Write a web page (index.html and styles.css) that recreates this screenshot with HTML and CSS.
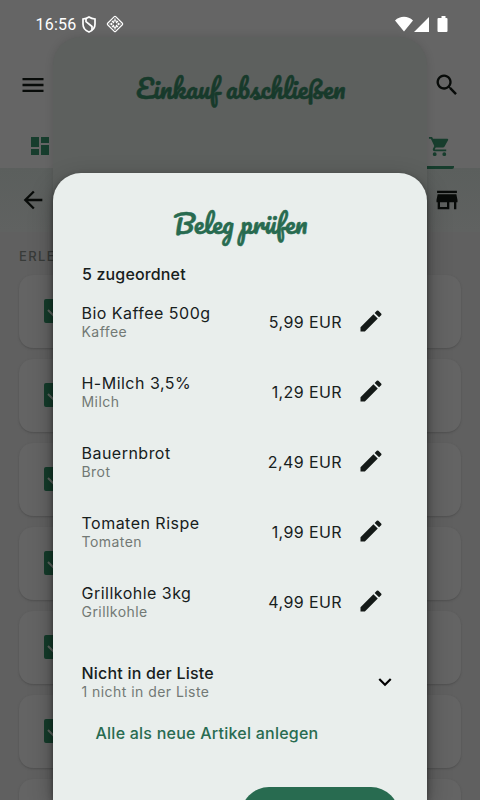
FILE: index.html
```
<!DOCTYPE html>
<html lang="de">
<head>
<meta charset="utf-8">
<meta name="viewport" content="width=device-width, initial-scale=1">
<title>Beleg prüfen</title>
<link rel="stylesheet" href="styles.css">
</head>
<body>
<svg width="0" height="0" class="sprite">
  <symbol id="pencil" viewBox="0 0 24 24"><path d="M3 17.250V21h3.750L17.810 9.940l-3.750-3.750zM20.710 7.040a1 1 0 0 0 0-1.410l-2.340-2.340a1 1 0 0 0-1.410 0l-1.830 1.830 3.750 3.750z"/></symbol>
  <symbol id="check" viewBox="0 0 24 24"><rect width="24" height="24" rx="2"/><path d="M4 11l6 6L21 6" fill="none" stroke="#606763" stroke-width="2"/></symbol>
</svg>
<div class="screen">
  <header class="top">
    <div class="bar menu-bar">
      <svg class="icon" viewBox="0 0 24 24"><path d="M3 18h18v-2H3zm0-5h18v-2H3zm0-7v2h18V6z"/></svg>
      <svg class="icon" viewBox="0 0 24 24"><path d="M15.500 14h-.79l-.28-.27A6.500 6.500 0 1 0 13.730 14.430l.27.28v.79l5 4.990L20.490 19zm-6 0a4.500 4.500 0 1 1 0-9 4.500 4.500 0 0 1 0 9z"/></svg>
    </div>
    <div class="bar tabs">
      <svg class="tab" viewBox="0 0 24 24"><path d="M3 13h8V3H3zm0 8h8v-6H3zm10 0h8V11h-8zm0-18v6h8V3z"/></svg>
      <span class="tab-active"><svg class="tab cart" viewBox="0 0 24 24"><path d="M7 18a2 2 0 1 0 0 4 2 2 0 0 0 0-4zM1 2v2h2l3.600 7.590-1.350 2.450C4.520 15.370 5.480 17 7 17h12v-2H7.420a.25.25 0 0 1-.22-.37L8.100 13h7.450c.75 0 1.410-.41 1.750-1.030l3.580-6.490A1 1 0 0 0 20 4H5.210l-.94-2zm16 16a2 2 0 1 0 0 4 2 2 0 0 0 0-4z"/></svg></span>
    </div>
  </header>
  <div class="bar sub-bar">
    <svg class="icon" viewBox="0 0 24 24"><path d="M20 11H7.830l5.590-5.590L12 4l-8 8 8 8 1.410-1.410L7.830 13H20z"/></svg>
    <svg class="icon store" viewBox="0 0 24 24"><path d="M20.500 4h-17v2h17zm.5 10v-2l-1-5H4l-1 5v2h1v6h10v-6h4v6h2v-6zm-9 4H6v-4h6z"/></svg>
  </div>
  <main class="list">
    <h2 class="section">ERLEDIGT</h2>
    <div class="card"><svg class="check"><use href="#check"/></svg></div>
    <div class="card"><svg class="check"><use href="#check"/></svg></div>
    <div class="card"><svg class="check"><use href="#check"/></svg></div>
    <div class="card"><svg class="check"><use href="#check"/></svg></div>
    <div class="card"><svg class="check"><use href="#check"/></svg></div>
    <div class="card"><svg class="check"><use href="#check"/></svg></div>
    <div class="card"><svg class="check"><use href="#check"/></svg></div>
  </main>
</div>

<section class="sheet back-sheet"><h1 class="script-title">Einkauf abschließen</h1></section>

<section class="sheet front-sheet">
  <h1 class="script-title">Beleg prüfen</h1>
  <h2 class="count">5 zugeordnet</h2>
  <ul class="items">
    <li class="item"><div class="text"><b>Bio Kaffee 500g</b><small>Kaffee</small></div><span class="price">5,99 EUR</span><svg class="pencil"><use href="#pencil"/></svg></li>
    <li class="item"><div class="text"><b>H-Milch 3,5%</b><small>Milch</small></div><span class="price">1,29 EUR</span><svg class="pencil"><use href="#pencil"/></svg></li>
    <li class="item"><div class="text"><b>Bauernbrot</b><small>Brot</small></div><span class="price">2,49 EUR</span><svg class="pencil"><use href="#pencil"/></svg></li>
    <li class="item"><div class="text"><b>Tomaten Rispe</b><small>Tomaten</small></div><span class="price">1,99 EUR</span><svg class="pencil"><use href="#pencil"/></svg></li>
    <li class="item"><div class="text"><b>Grillkohle 3kg</b><small>Grillkohle</small></div><span class="price">4,99 EUR</span><svg class="pencil"><use href="#pencil"/></svg></li>
  </ul>
  <div class="item extra"><div class="text"><b>Nicht in der Liste</b><small>1 nicht in der Liste</small></div><svg class="chevron" viewBox="0 0 24 24"><path d="M16.590 8.590L12 13.170 7.410 8.590 6 10l6 6 6-6z"/></svg></div>
  <a class="link">Alle als neue Artikel anlegen</a>
  <div class="confirm"></div>
</section>

<div class="status">
  <span class="time">16:56</span>
  <svg class="shield" viewBox="0 0 14 17"><path d="M7 1C5 2.300 3 2.800 1 3v5c0 4 2.500 6.700 6 8 3.500-1.300 6-4 6-8V3C11 2.800 9 2.300 7 1z"/><path d="M4 2.700v3l6 4.800v3.500"/></svg>
  <svg class="diamond" viewBox="0 0 18 18"><rect x="3.300" y="3.300" width="11.400" height="11.400" rx="1" transform="rotate(45 9 9)"/><path d="M9 3.500v3M9 11.500v3M3.500 9h3M11.500 9h3M6 6l2 2M12 6l-2 2M6 12l2-2M12 12l-2-2M7 6.500l2-1 2 1M7 11.500l2 1 2-1M6 8l-1 1 1 1M12 8l1 1-1 1"/></svg>
  <svg class="system" viewBox="0 0 53 16"><path d="M0 4.500C5-.5 13-.5 18 4.500L9 15.500zM34 1v15H19zM44.500 2h2V0h4v2h1q1 0 1 1v12q0 1-1 1h-8q-1 0-1-1V3q0-1 1-1z"/></svg>
</div>
</body>
</html>
```
FILE: styles.css
```
* { box-sizing: border-box; }
html, body { margin: 0; height: 100%; overflow: hidden; }
body { background: #606060; font-family: Inter, sans-serif; color: #17201c; }
h1, h2, ul { margin: 0; padding: 0; list-style: none; }
svg { display: block; flex: none; }
.sprite { position: absolute; }

/* page behind the dialogs */
.screen { height: 800px; overflow: hidden; }
.top { height: 168px; padding-top: 60px; background: #656565; }
.bar { display: flex; align-items: center; justify-content: space-between; }
.icon { width: 28px; height: 28px; fill: #080b09; }
.menu-bar { height: 50px; padding: 0 19px; }
.tabs { height: 59px; padding: 0 26px 0 28px; }
.tab { width: 24px; height: 24px; margin-top: 13px; fill: #173d2d; }
.tab-active { display: flex; justify-content: flex-end; width: 54px; height: 59px; padding-right: 3px; border-bottom: 3px solid #173d2d; border-radius: 2px; }
.cart { width: 23px; height: 23px; margin-top: 25px; }
.sub-bar { height: 64px; padding: 0 19px; background: linear-gradient(#5b5f5d, #606261); }
.list { padding: 15px 19px 0; }
.section { height: 28px; font: 500 13px/18px Inter, sans-serif; letter-spacing: 1.4px; color: #383b39; }
.card { height: 73px; margin-bottom: 11px; padding: 24px 0 0 25px; border-radius: 14px; background: #646464; box-shadow: 0 1px 2px #505050; }
.check { width: 24px; height: 24px; fill: #153c2b; }

/* stacked dialogs */
.sheet { position: absolute; left: 53px; width: 373.5px; bottom: 0; border-radius: 28px 28px 0 0; }
.back-sheet { top: 37px; background: #5d605e; box-shadow: 0 0 8px rgba(0, 0, 0, .12); }
.front-sheet { top: 173px; padding: 30px 28.5px 0 29px; background: #e9eeec; box-shadow: 0 2px 5px rgba(0, 0, 0, .35), 0 8px 24px rgba(0, 0, 0, .3); overflow: hidden; }
.script-title { text-align: center; font: 400 25.6px/42px Pacifico, Lato, cursive; -webkit-text-stroke: .5px currentColor; color: #286b50; white-space: nowrap; }
.back-sheet .script-title { padding: 31px 0 0 2px; color: #173a2b; }
.front-sheet .script-title { height: 58px; padding-left: 1px; }
.count { margin-top: 1px; font-size: 16px; font-weight: 500; line-height: 24px; letter-spacing: .15px; }
.item { display: flex; align-items: center; height: 70px; }
.text { display: flex; flex-direction: column; flex: 1; margin-left: -.5px; }
.text b { font-weight: 400; font-size: 16px; line-height: 20px; letter-spacing: .48px; }
.text small { font-size: 14px; line-height: 17px; letter-spacing: .45px; color: #727975; }
.price { padding-top: 1px; font-size: 16px; letter-spacing: .4px; }
.pencil { width: 28px; height: 28px; margin: 0 13px 0 15px; fill: #141917; }
.extra { margin-top: 10px; }
.extra b { font-weight: 500; letter-spacing: .2px; }
.extra small { letter-spacing: .45px; }
.chevron { width: 26px; height: 26px; margin-top: 2px; }
.link { display: block; margin: 5px 0 0 13.5px; font-size: 16px; font-weight: 500; line-height: 24px; letter-spacing: .24px; color: #286b50; }
.confirm { width: 158px; height: 56px; margin: 42px -1px 0 auto; border-radius: 28px; background: #286b50; }

/* system status */
.status { position: absolute; top: 0; left: 0; display: flex; align-items: center; width: 480px; height: 48px; padding: 0 32px 0 35.5px; color: #fff; }
.time { font: 16px Roboto, sans-serif; letter-spacing: .2px; }
.shield { width: 14px; height: 17px; margin-left: 6px; fill: none; stroke: #fff; stroke-width: 1.700; }
.diamond { width: 18px; height: 18px; margin-left: 10px; fill: none; stroke: #fff; stroke-width: 1.200; }
.system { width: 53px; height: 16px; margin-left: auto; fill: #fff; }
```
